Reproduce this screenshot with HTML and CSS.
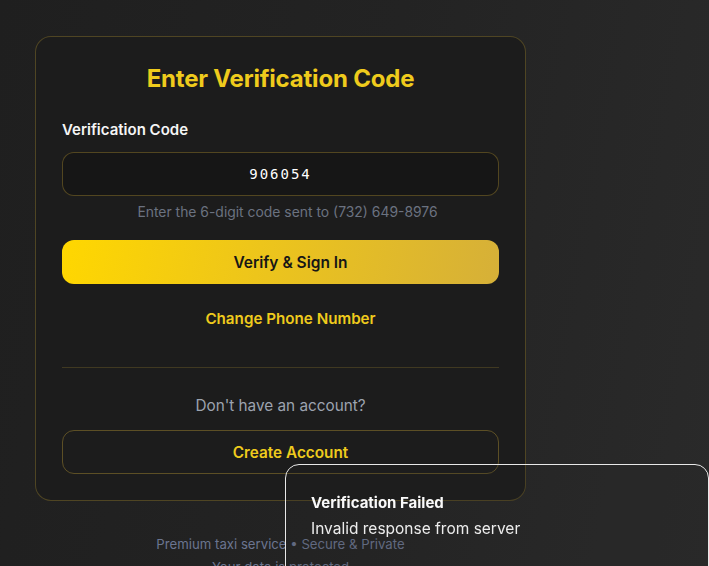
FILE: index.html
```html
<!DOCTYPE html>
<html lang="en">
<head>
<meta charset="utf-8">
<title>Enter Verification Code</title>
<link rel="stylesheet" href="styles.css">
</head>
<body>
<main class="page">
  <section class="card">
    <h1 class="title">Enter Verification Code</h1>
    <label class="label" for="code">Verification Code</label>
    <div class="input">906054</div>
    <p class="hint">Enter the 6-digit code sent to (732) 649-8976</p>
    <button class="primary">Verify &amp; Sign In</button>
    <a class="link">Change Phone Number</a>
    <hr class="divider">
    <p class="muted">Don't have an account?</p>
    <button class="outline">Create Account</button>
  </section>
  <footer class="footer">
    <div class="line1">Premium taxi service • Secure &amp; Private</div>
    <div class="line2">Your data is protected</div>
  </footer>
</main>
<div class="toast">
  <div class="toast-title">Verification Failed</div>
  <div class="toast-desc">Invalid response from server</div>
</div>
</body>
</html>
```

FILE: styles.css
```css
* { box-sizing: border-box; }
html, body { margin: 0; height: 100%; }
body {
  font-family: Inter, "Noto Sans", sans-serif;
  background: linear-gradient(100deg, #1f1f1f 0%, #232323 50%, #2a2a2a 100%);
  color: #fff;
  overflow: hidden;
}
.page {
  padding: 36px 0 0 35px;
  width: 526px;
}
.card {
  width: 491px;
  border: 1px solid rgba(212, 175, 55, 0.28);
  border-radius: 16px;
  background: #1c1c1c;
  padding: 26px 26px 26px;
  display: flex;
  flex-direction: column;
}
.title {
  margin: 0;
  text-align: center;
  font-size: 24px;
  line-height: 32px;
  font-weight: 700;
  color: #efcb1c;
  letter-spacing: -0.2px;
}
.label {
  margin-top: 25px;
  font-size: 15px;
  line-height: 20px;
  font-weight: 600;
  color: #f5f5f5;
}
.input {
  margin-top: 12px;
  height: 44px;
  border: 1px solid rgba(212, 175, 55, 0.32);
  border-radius: 12px;
  background: #161616;
  display: flex;
  align-items: center;
  justify-content: center;
  font-family: "DejaVu Sans Mono", "Liberation Mono", monospace;
  font-size: 14px;
  letter-spacing: 2px;
  color: #fff;
}
.hint {
  margin: 8px 0 0;
  padding-left: 14px;
  text-align: center;
  font-size: 13.9px;
  line-height: 16px;
  color: #6b7280;
}
.primary {
  margin-top: 20px;
  height: 44px;
  border: none;
  border-radius: 12px;
  padding: 0 0 0 20px;
  background: linear-gradient(100deg, #ffd700 0%, #edc51b 45%, #d6b038 100%);
  font-family: inherit;
  font-size: 15.5px;
  font-weight: 600;
  color: #161616;
}
.link {
  margin-top: 25px;
  padding-left: 20px;
  text-align: center;
  font-size: 15.2px;
  line-height: 20px;
  font-weight: 600;
  color: #efcb1c;
}
.divider {
  width: 100%;
  margin: 38px 0 0;
  border: none;
  border-top: 1px solid rgba(212, 175, 55, 0.2);
}
.muted {
  margin: 28px 0 0;
  text-align: center;
  font-size: 15.3px;
  line-height: 20px;
  color: #9ca3af;
}
.outline {
  margin-top: 14px;
  height: 44px;
  border: 1px solid rgba(212, 175, 55, 0.35);
  border-radius: 12px;
  padding: 0 0 0 20px;
  background: transparent;
  font-family: inherit;
  font-size: 15.3px;
  font-weight: 600;
  color: #efcb1c;
}
.footer {
  margin-top: 32px;
  width: 491px;
  text-align: center;
  font-size: 13.2px;
  line-height: 23px;
  color: #6b7590;
}
.toast {
  position: fixed;
  top: 464px;
  left: 285px;
  width: 424px;
  height: 130px;
  border: 1px solid #e8e8e8;
  border-radius: 14px;
  background: rgba(40, 40, 40, 0.15);
  padding: 28px 25px;
}
.toast-title {
  font-size: 15px;
  line-height: 20px;
  font-weight: 700;
  color: #fafafa;
}
.toast-desc {
  margin-top: 6px;
  font-size: 15.5px;
  line-height: 20px;
  color: #ececec;
}
```
